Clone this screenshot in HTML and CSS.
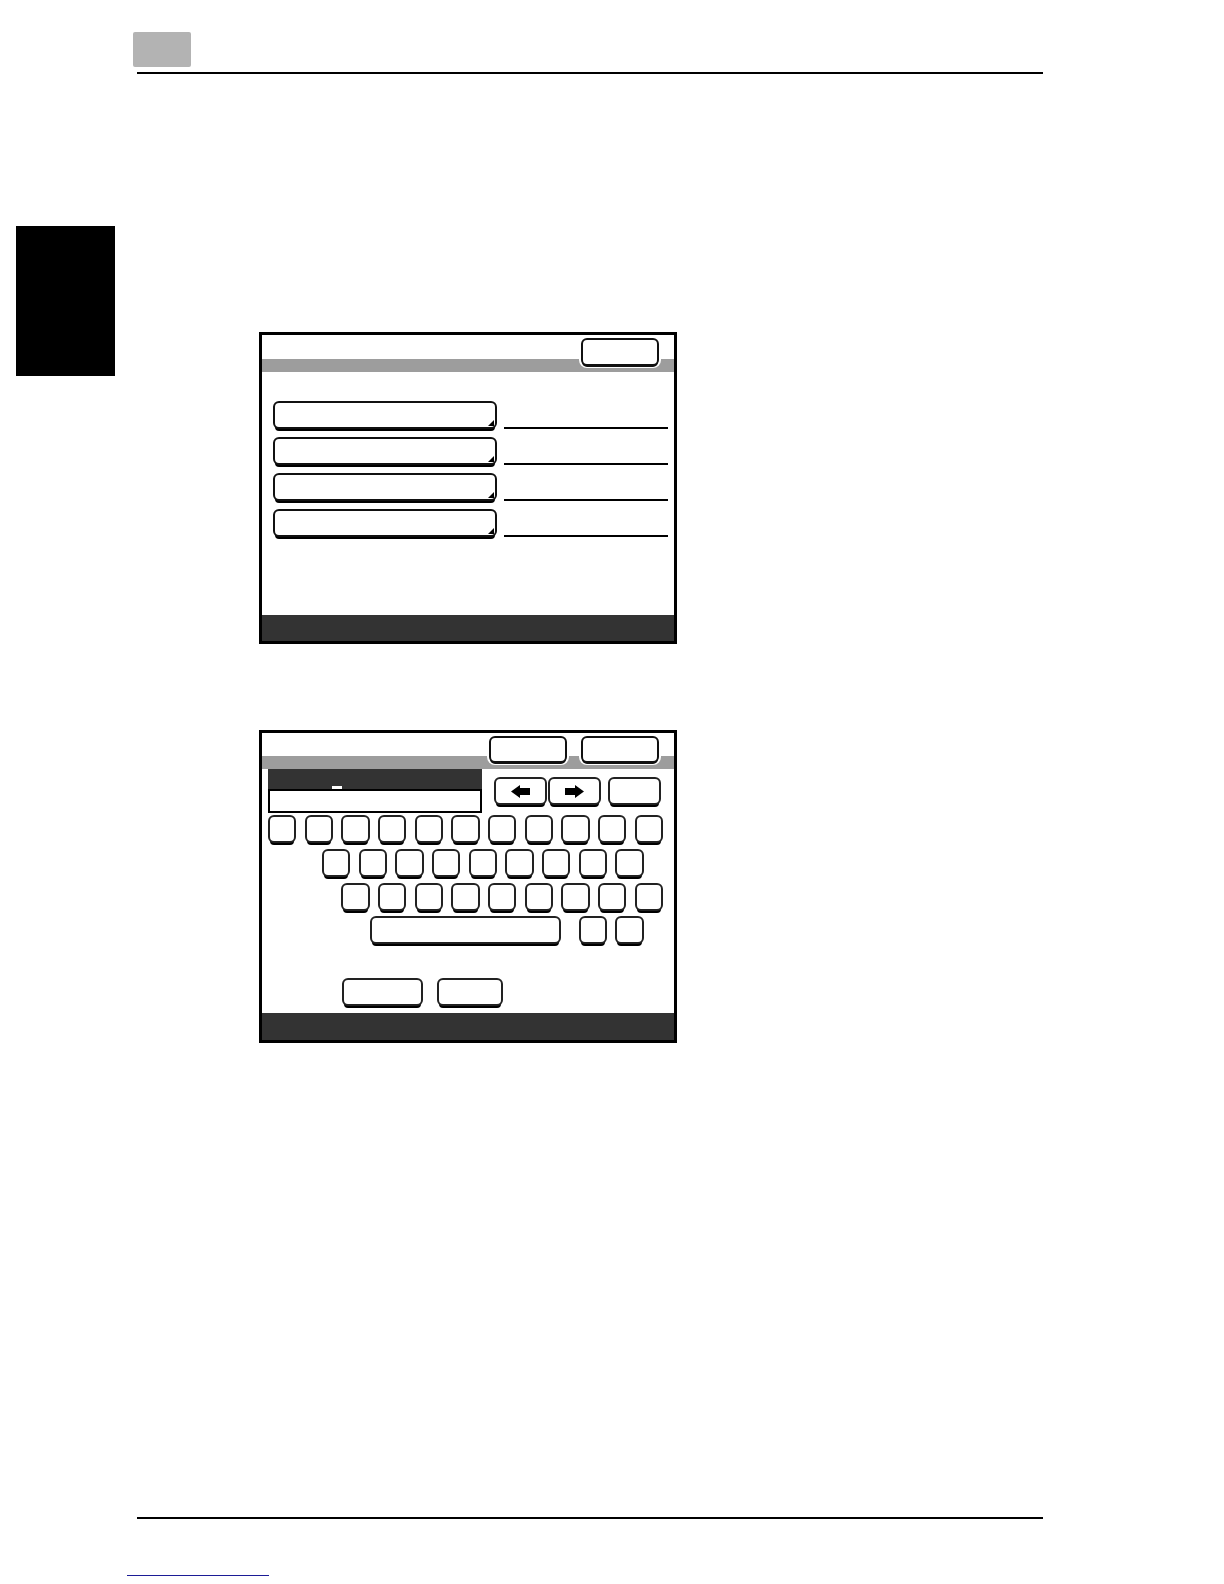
FILE: index.html
```html
<!DOCTYPE html>
<html lang="en">
<head>
<meta charset="utf-8">
<title>Screen diagrams</title>
<link rel="stylesheet" href="styles.css">
</head>
<body>
<div class="page">
  <header class="page-header">
    <div class="chapter-box"></div>
    <div class="header-rule"></div>
  </header>

  <div class="main">
    <div class="side-tab"></div>

    <div class="content">
      <!-- Screen 1 -->
      <section class="screen screen-one">
        <div class="screen-title title-one">
          <div class="top-btn btn-one"></div>
        </div>
        <div class="screen-body body-one">
          <div class="field-row"><div class="field-btn"></div><div class="field-line"></div></div>
          <div class="field-row"><div class="field-btn"></div><div class="field-line"></div></div>
          <div class="field-row"><div class="field-btn"></div><div class="field-line"></div></div>
          <div class="field-row"><div class="field-btn"></div><div class="field-line"></div></div>
        </div>
        <div class="screen-status"></div>
      </section>

      <!-- Screen 2 -->
      <section class="screen screen-two">
        <div class="screen-title title-two">
          <div class="top-btn btn-two"></div>
          <div class="top-btn btn-two"></div>
        </div>
        <div class="screen-body body-two">
          <div class="entry-row">
            <div class="entry">
              <div class="entry-dark"><span class="cursor"></span></div>
              <div class="entry-field"></div>
            </div>
            <div class="nav-btns">
              <div class="key nav-key">
                <svg width="19" height="13" viewBox="0 0 19 13"><path d="M0 6.5 L9 0 V3 H19 V10 H9 V13 Z" fill="#000"/></svg>
              </div>
              <div class="key nav-key">
                <svg width="19" height="13" viewBox="0 0 19 13"><path d="M19 6.5 L10 0 V3 H0 V10 H10 V13 Z" fill="#000"/></svg>
              </div>
              <div class="key nav-key nav-third"></div>
            </div>
          </div>

          <div class="key-row row-1">
            <div class="key"></div><div class="key"></div><div class="key"></div><div class="key"></div>
            <div class="key"></div><div class="key"></div><div class="key"></div><div class="key"></div>
            <div class="key"></div><div class="key"></div><div class="key"></div>
          </div>
          <div class="key-row row-2">
            <div class="key"></div><div class="key"></div><div class="key"></div><div class="key"></div>
            <div class="key"></div><div class="key"></div><div class="key"></div><div class="key"></div>
            <div class="key"></div>
          </div>
          <div class="key-row row-3">
            <div class="key"></div><div class="key"></div><div class="key"></div><div class="key"></div>
            <div class="key"></div><div class="key"></div><div class="key"></div><div class="key"></div>
            <div class="key"></div>
          </div>
          <div class="key-row row-4">
            <div class="key space-key"></div>
            <div class="key"></div><div class="key"></div>
          </div>

          <div class="action-row">
            <div class="key action-a"></div>
            <div class="key action-b"></div>
          </div>
        </div>
        <div class="screen-status"></div>
      </section>
    </div>
  </div>

  <footer class="page-footer">
    <div class="footer-rule"></div>
    <div class="footer-link"></div>
  </footer>
</div>
</body>
</html>
```

FILE: styles.css
```css
* { box-sizing: border-box; }

html, body {
  margin: 0;
  padding: 0;
  background: #fff;
  font-family: "Liberation Sans", Arial, sans-serif;
}

.page {
  width: 1224px;
  height: 1584px;
  overflow: hidden;
  background: #fff;
}

/* ---------- page header ---------- */
.page-header {
  padding-top: 32px;
}
.chapter-box {
  margin-left: 133px;
  width: 58px;
  height: 35px;
  background: #b3b3b3;
  border-radius: 2px;
}
.header-rule {
  margin-top: 5px;
  margin-left: 137px;
  width: 906px;
  height: 2px;
  background: #000;
}

/* ---------- main ---------- */
.main {
  display: flex;
  align-items: flex-start;
}
.side-tab {
  flex: none;
  margin-left: 16px;
  margin-top: 152px;
  width: 99px;
  height: 150px;
  background: #000;
}
.content {
  margin-left: 144px;
  display: flex;
  flex-direction: column;
}

/* ---------- generic screen ---------- */
.screen {
  width: 418px;
  border: 3px solid #000;
  background: #fff;
  display: flex;
  flex-direction: column;
}
.screen-one {
  margin-top: 258px;
  height: 312px;
}
.screen-two {
  margin-top: 86px;
  height: 313px;
}
.screen-title {
  display: flex;
  justify-content: flex-end;
  align-items: flex-start;
  gap: 14.5px;
  padding-top: 3px;
  padding-right: 15px;
}
.title-one {
  height: 37px;
  background: linear-gradient(to bottom, #fff 0, #fff 24px, #9d9d9d 24px, #9d9d9d 100%);
}
.title-two {
  height: 36px;
  padding-right: 15.5px;
  background: linear-gradient(to bottom, #fff 0, #fff 23px, #9d9d9d 23px, #9d9d9d 100%);
}
.top-btn {
  background: #fff;
  border: 2px solid #111;
  border-radius: 6px;
  box-shadow: 0 2px 0 -1px #111, 0 0 0 2px #fff;
}
.btn-one {
  width: 78px;
  height: 28px;
}
.btn-two {
  width: 77.5px;
  height: 27px;
}
.screen-body {
  flex: 1;
}
.screen-status {
  background: #333;
}
.screen-one .screen-status { height: 26px; }
.screen-two .screen-status { height: 27px; }

/* ---------- screen 1 ---------- */
.body-one {
  padding: 29px 6px 0 11px;
  display: flex;
  flex-direction: column;
  gap: 8px;
}
.field-row {
  display: flex;
  height: 28px;
}
.field-btn {
  position: relative;
  flex: none;
  width: 224px;
  height: 28px;
  background: #fff;
  border: 2px solid #111;
  border-radius: 6px;
  box-shadow: 0 4px 0 -2px #000;
}
.field-btn::after {
  content: "";
  position: absolute;
  right: 1px;
  bottom: 1px;
  width: 0;
  height: 0;
  border-left: 6px solid transparent;
  border-bottom: 6px solid #000;
}
.field-line {
  flex: 1;
  align-self: flex-end;
  margin-left: 7px;
  margin-bottom: 0.5px;
  height: 1.5px;
  background: #000;
}

/* ---------- screen 2 ---------- */
.body-two {
  padding-left: 6px;
  display: flex;
  flex-direction: column;
}
.entry-row {
  display: flex;
  align-items: flex-start;
  height: 44px;
}
.entry {
  flex: none;
  width: 214px;
}
.entry-dark {
  height: 20px;
  background: #333;
  display: flex;
  align-items: flex-end;
  padding-left: 64px;
}
.cursor {
  display: block;
  width: 10px;
  height: 3px;
  background: #fff;
}
.entry-field {
  height: 24px;
  border: 2px solid #000;
  background: #fff;
}
.nav-btns {
  display: flex;
  margin-left: 12px;
  margin-top: 8px;
  gap: 1.5px;
}
.key {
  flex: none;
  width: 28.4px;
  height: 28px;
  background: #fff;
  border: 2px solid #222;
  border-radius: 6px;
  box-shadow: 0 4px 0 -2px #000;
}
.nav-key {
  width: 52.5px;
  display: flex;
  align-items: center;
  justify-content: center;
}
.nav-third {
  margin-left: 6px;
}
.key-row {
  display: flex;
  gap: 8.27px;
}
.row-1 { margin-top: 2px; }
.row-2 { margin-top: 6px; margin-left: 54px; }
.row-3 { margin-top: 6px; margin-left: 73.4px; }
.row-4 { margin-top: 5px; margin-left: 102.4px; }
.space-key {
  width: 191px;
  margin-right: 9px;
}
.action-row {
  display: flex;
  gap: 13.4px;
  margin-top: 34px;
  margin-left: 74.3px;
}
.action-a { width: 81px; }
.action-b { width: 66.6px; }

/* ---------- page footer ---------- */
.page-footer {
  margin-top: 474px;
}
.footer-rule {
  margin-left: 137px;
  width: 906px;
  height: 1.5px;
  background: #000;
}
.footer-link {
  margin-top: 56px;
  margin-left: 127px;
  width: 142px;
  height: 1.5px;
  background: #1c1c96;
}
```
